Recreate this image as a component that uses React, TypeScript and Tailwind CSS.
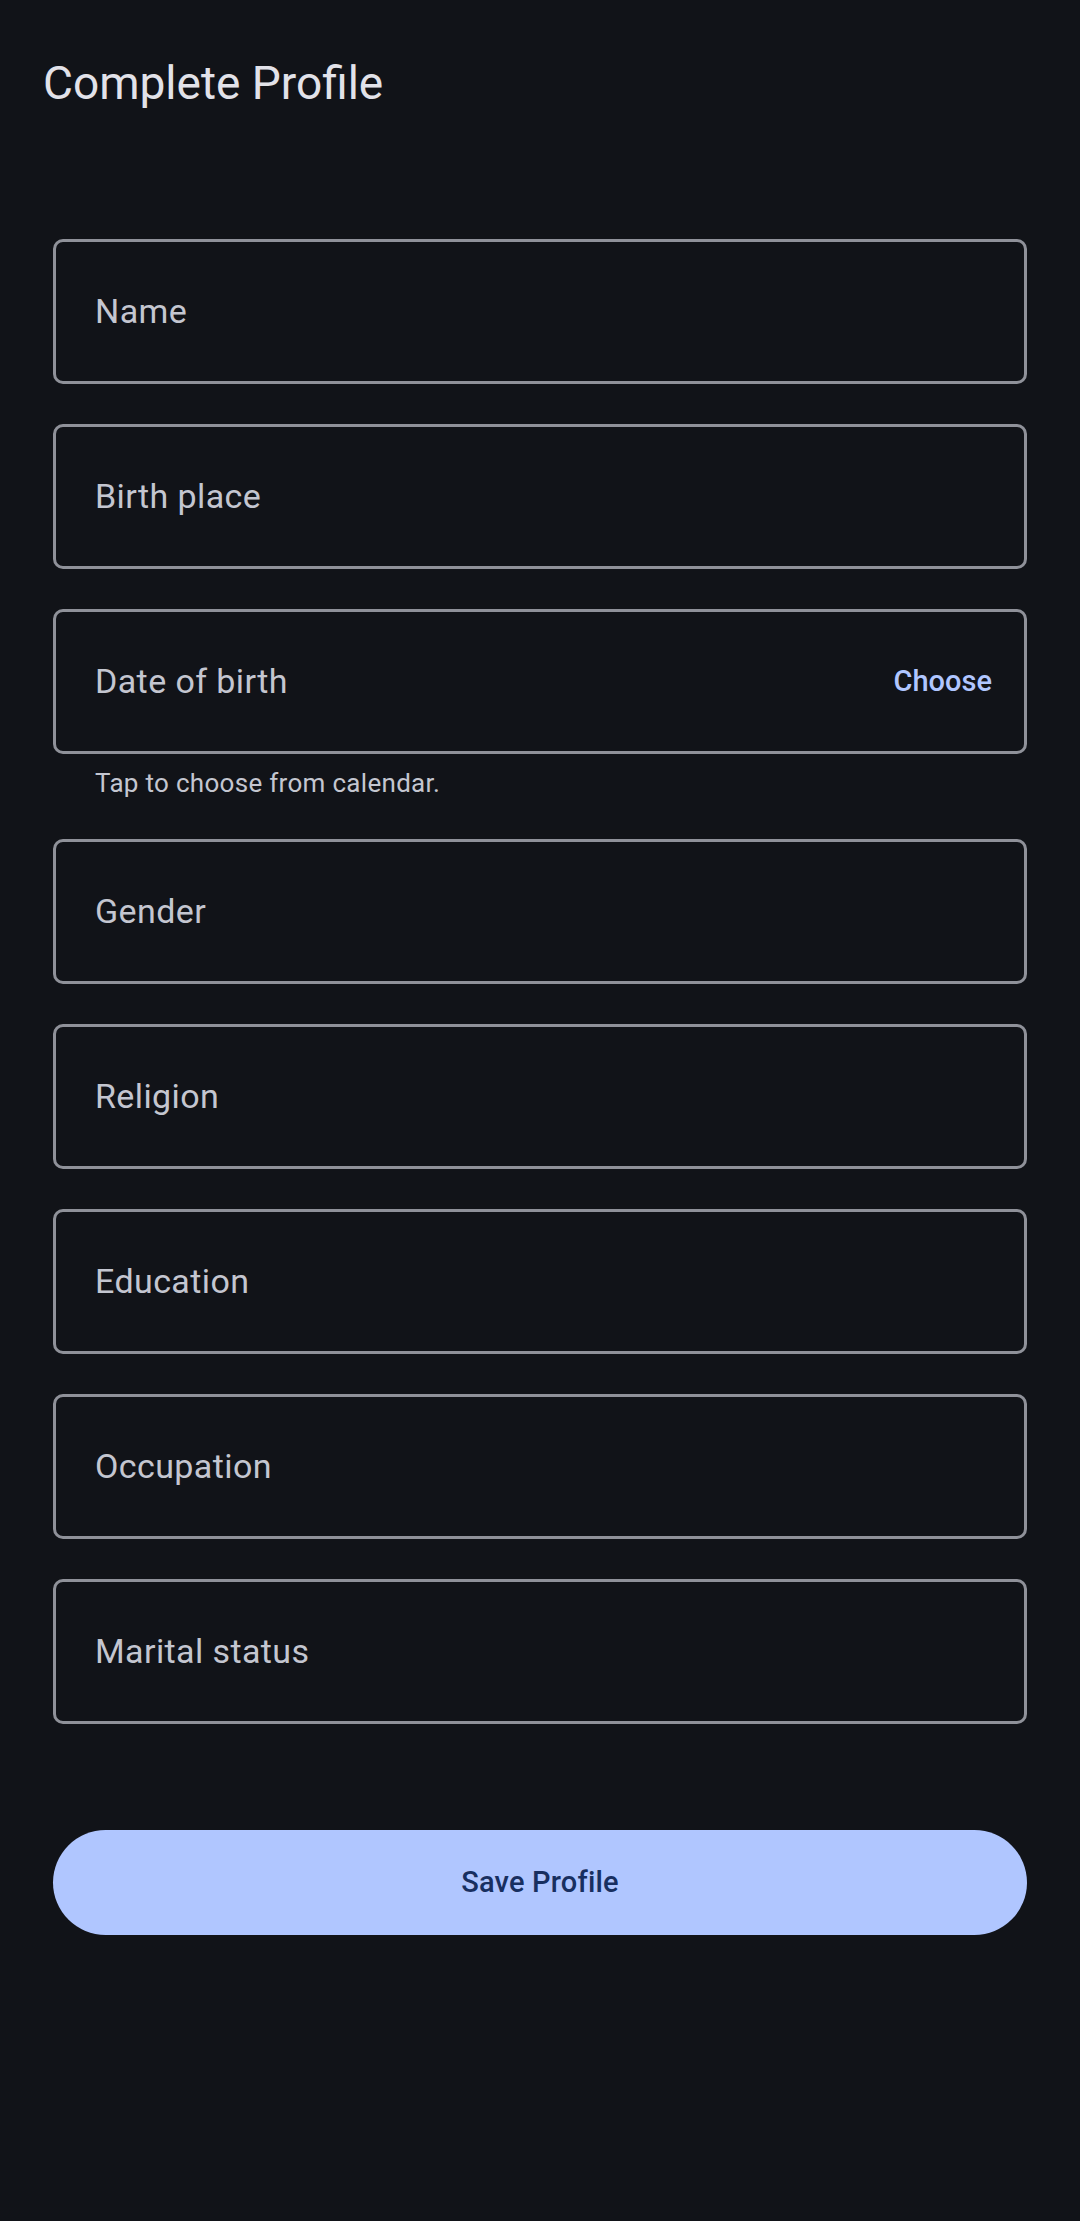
const fields = ["Name", "Birth place", "Date of birth", "Gender", "Religion", "Education", "Occupation", "Marital status"]

function Field({ label, action }: { label: string; action?: string }) {
  return (
    <div className="flex h-[145px] items-center justify-between rounded-[10px] border-[3px] border-[#8f9199] pl-[39px] pr-[32px]">
      <span className="text-[34px] tracking-[0.4px] text-[#c4c6d0]">{label}</span>
      {action && <span className="text-[29px] font-medium text-[#b0c6ff]">{action}</span>}
    </div>
  )
}

export default function App() {
  return (
    <div className="min-h-[2221px] bg-[#111318] font-['Roboto','Liberation_Sans',sans-serif]">
      {/* Header */}
      <h1 className="pl-[43px] pt-[56px] text-[46px] leading-[54px] text-[#e2e2e9]">Complete Profile</h1>

      {/* Form */}
      <div className="mx-[53px] mt-[129px] flex flex-col gap-[40px]">
        {fields.map((f) =>
          f === "Date of birth" ? (
            <div key={f}>
              <Field label={f} action="Choose" />
              <p className="pl-[42px] pt-[13px] text-[26px] leading-[32px] tracking-[0.3px] text-[#c4c6d0]">
                Tap to choose from calendar.
              </p>
            </div>
          ) : (
            <Field key={f} label={f} />
          )
        )}
      </div>

      <div className="mx-[53px] mt-[106px]">
        <button className="flex h-[105px] w-full items-center justify-center rounded-full bg-[#b0c6ff] text-[29px] font-medium tracking-[0.2px] text-[#182f60]">
          Save Profile
        </button>
      </div>
    </div>
  )
}
